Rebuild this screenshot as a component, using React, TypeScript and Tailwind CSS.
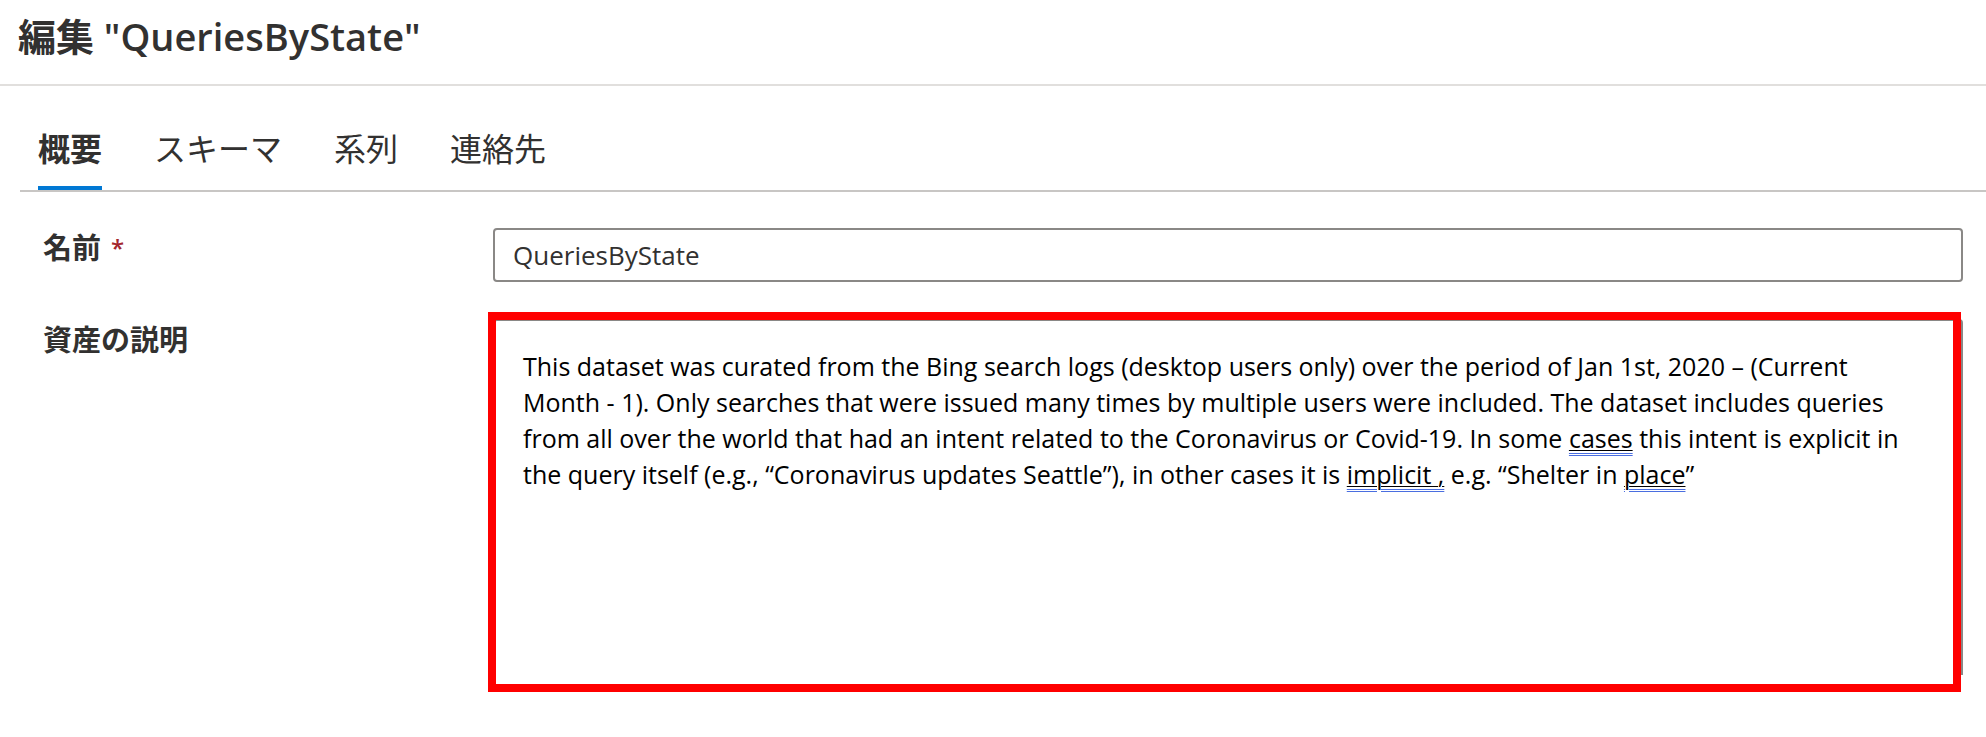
const tabs = [
  { label: "概要", active: true },
  { label: "スキーマ", active: false },
  { label: "系列", active: false },
  { label: "連絡先", active: false },
];

const Flagged = ({ children }: { children: React.ReactNode }) => (
  <span className="underline decoration-black decoration-1 underline-offset-[2px]">
    <span className="underline decoration-double decoration-[#4a6ee0] decoration-1 underline-offset-[5px]">
      {children}
    </span>
  </span>
);

export default function App() {
  return (
    <div className="min-h-screen w-full bg-white font-['Open_Sans','Noto_Sans_CJK_JP',sans-serif] text-[#323130]">
      {/* Header */}
      <header className="h-[84px] pl-[18px] pt-[12px]">
        <h1 className="text-[38px] font-semibold leading-[48px]">編集 "QueriesByState"</h1>
      </header>
      <div className="h-[2px] bg-[#e1dfdd]" />

      {/* Tabs */}
      <nav className="ml-[20px] flex gap-[52px] border-b-2 border-[#c8c6c4] pl-[18px]">
        {tabs.map((tab) => (
          <div
            key={tab.label}
            className={`relative pt-[43px] pb-[21px] text-[32px] leading-[40px] ${
              tab.active ? "font-bold" : "font-normal"
            }`}
          >
            {tab.label}
            {tab.active && <div className="absolute bottom-0 left-0 right-0 h-[4px] bg-[#0078d4]" />}
          </div>
        ))}
      </nav>

      {/* Form */}
      <div className="mt-[36px] flex flex-col gap-[37px] pl-[43px] pr-[23px]">
        <div className="flex items-start">
          <label className="w-[450px] shrink-0 text-[29px] font-bold leading-[40px]">
            名前<span className="ml-[10px] align-top text-[24px] font-semibold text-[#a4262c]">*</span>
          </label>
          <div className="flex h-[54px] flex-1 items-center rounded-[4px] border-2 border-[#8a8886] pl-[18px] text-[26px]">
            QueriesByState
          </div>
        </div>

        <div className="flex items-start">
          <label className="w-[450px] shrink-0 pt-[1px] text-[29px] font-bold leading-[40px]">資産の説明</label>
          <div className="relative flex-1">
            <div className="h-[356px] rounded-t-[4px] border-x-2 border-t-2 border-[#8a8886] pl-[28px] pt-[27px]">
              <p className="whitespace-nowrap text-[25px] leading-[36px] text-black">
                This dataset was curated from the Bing search logs (desktop users only) over the period of Jan 1st, 2020 – (Current
                <br />
                Month - 1). Only searches that were issued many times by multiple users were included. The dataset includes queries
                <br />
                from all over the world that had an intent related to the Coronavirus or Covid-19. In some <Flagged>cases</Flagged> this intent is explicit in
                <br />
                the query itself (e.g., “Coronavirus updates Seattle”), in other cases it is <Flagged>implicit ,</Flagged> e.g. “Shelter in <Flagged>place</Flagged>”
              </p>
            </div>
            {/* annotation box */}
            <div className="pointer-events-none absolute -bottom-[17px] -left-[5px] -top-[7px] right-[2px] border-[8px] border-[#ff0000]" />
          </div>
        </div>
      </div>
    </div>
  );
}
